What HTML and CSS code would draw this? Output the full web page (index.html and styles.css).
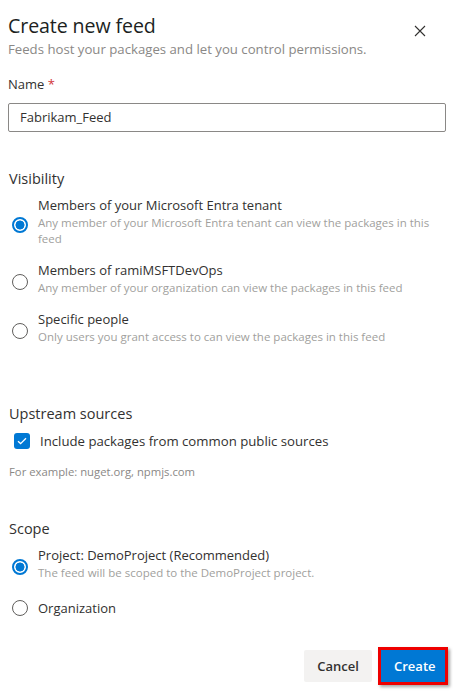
FILE: index.html
```html
<!DOCTYPE html>
<html lang="en">
<head>
<meta charset="utf-8">
<title>Create new feed</title>
<link rel="stylesheet" href="styles.css">
</head>
<body>
<div class="panel">
  <div class="header">
    <div class="header-text">
      <h1 class="title">Create new feed</h1>
      <p class="subtitle">Feeds host your packages and let you control permissions.</p>
    </div>
    <button class="close" aria-label="Close">
      <svg width="12" height="12" viewBox="0 0 12 12"><path d="M1 1L11 11M11 1L1 11" stroke="#323130" stroke-width="1.1" fill="none"/></svg>
    </button>
  </div>

  <label class="field-label">Name <span class="req">*</span></label>
  <div class="input">Fabrikam_Feed</div>

  <h2 class="section visibility">Visibility</h2>
  <div class="options">
    <div class="option first">
      <span class="radio checked offset"></span>
      <div class="opt-text">
        <div class="opt-title">Members of your Microsoft Entra tenant</div>
        <div class="opt-desc">Any member of your Microsoft Entra tenant can view the packages in this feed</div>
      </div>
    </div>
    <div class="option">
      <span class="radio offset"></span>
      <div class="opt-text">
        <div class="opt-title">Members of ramiMSFTDevOps</div>
        <div class="opt-desc">Any member of your organization can view the packages in this feed</div>
      </div>
    </div>
    <div class="option">
      <span class="radio offset"></span>
      <div class="opt-text">
        <div class="opt-title">Specific people</div>
        <div class="opt-desc">Only users you grant access to can view the packages in this feed</div>
      </div>
    </div>
  </div>

  <h2 class="section upstream">Upstream sources</h2>
  <div class="check-row">
    <span class="checkbox">
      <svg width="10" height="8" viewBox="0 0 10 8"><path d="M1 4.2L3.6 6.6L9 1.2" stroke="#fff" stroke-width="1.3" fill="none"/></svg>
    </span>
    <span class="check-label">Include packages from common public sources</span>
  </div>
  <p class="hint">For example: nuget.org, npmjs.com</p>

  <h2 class="section scope">Scope</h2>
  <div class="options">
    <div class="option first">
      <span class="radio checked offset"></span>
      <div class="opt-text">
        <div class="opt-title">Project: DemoProject (Recommended)</div>
        <div class="opt-desc">The feed will be scoped to the DemoProject project.</div>
      </div>
    </div>
    <div class="option org">
      <span class="radio"></span>
      <div class="opt-text">
        <div class="opt-title">Organization</div>
      </div>
    </div>
  </div>

  <div class="footer">
    <button class="btn cancel">Cancel</button>
    <span class="highlight"><button class="btn create">Create</button></span>
  </div>
</div>
</body>
</html>
```
FILE: styles.css
```css
* { box-sizing: border-box; }
html, body { margin: 0; padding: 0; background: #fff; }
body {
  font-family: "Segoe UI", "Open Sans", "Noto Sans", sans-serif;
  color: #323130;
  width: 453px;
  height: 691px;
  overflow: hidden;
}
.panel {
  padding: 12px 7px 0 8px;
}
.header {
  display: flex;
  justify-content: space-between;
  align-items: flex-start;
}
.title {
  margin: 0;
  font-size: 19.6px;
  font-weight: 400;
  line-height: 28px;
  color: #201f1e;
  letter-spacing: -0.1px;
}
.subtitle {
  margin: 0;
  font-size: 13.2px;
  line-height: 18px;
  color: #8a8886;
}
.close {
  border: 0;
  background: transparent;
  padding: 0;
  width: 12px;
  height: 12px;
  margin: 13px 20px 0 0;
  display: flex;
}
.field-label {
  display: block;
  margin-top: 16px;
  font-size: 13px;
  line-height: 20px;
  color: #323130;
}
.req { color: #d13438; }
.input {
  margin-top: 9px;
  height: 29px;
  border: 1px solid #8a8886;
  border-radius: 2px;
  padding: 0 11px;
  font-size: 13px;
  line-height: 27px;
  color: #323130;
}
.section {
  margin: 0;
  font-size: 14.5px;
  font-weight: 400;
  line-height: 22px;
  color: #323130;
  padding-left: 1px;
}
.visibility { margin-top: 36px; }
.upstream { margin-top: 58px; }
.scope { margin-top: 38px; }
.options {
  display: flex;
  flex-direction: column;
  gap: 13px;
  padding-left: 4px;
}
.option {
  display: flex;
  align-items: center;
  gap: 10px;
}
.option.first { margin-top: 5px; }
.option.org { margin-top: 4px; }
.radio {
  flex: none;
  width: 16px;
  height: 16px;
  border-radius: 50%;
  border: 1px solid #605e5c;
  background: #fff;
}
.radio.offset { margin-top: 7px; }
.radio.checked {
  border: 2px solid #0078d4;
  background: radial-gradient(circle, #0078d4 0 4.2px, #fff 4.8px);
}
.opt-title {
  font-size: 13px;
  line-height: 20px;
  color: #323130;
}
.opt-desc {
  font-size: 11.5px;
  line-height: 16px;
  color: #a19f9d;
}
.check-row {
  margin-top: 6px;
  padding-left: 6px;
  display: flex;
  align-items: center;
  gap: 10px;
  height: 20px;
}
.checkbox {
  width: 16px;
  height: 16px;
  border-radius: 3px;
  background: #0078d4;
  display: flex;
  align-items: center;
  justify-content: center;
}
.check-label {
  font-size: 13.2px;
  line-height: 20px;
}
.hint {
  margin: 13px 0 0 1px;
  font-size: 11.3px;
  line-height: 16px;
  color: #8a8886;
}
.footer {
  margin-top: 29px;
  margin-right: -2px;
  display: flex;
  justify-content: flex-end;
  align-items: center;
  gap: 6px;
}
.btn {
  font-family: inherit;
  font-size: 13px;
  font-weight: 600;
  border: 0;
  border-radius: 2px;
  height: 32px;
  padding: 0 13px;
  cursor: pointer;
}
.cancel {
  background: #f3f2f1;
  color: #323130;
  width: 68px;
}
.highlight {
  display: flex;
  border: 3px solid #ee0000;
  box-shadow: 2px 2px 3px rgba(0, 0, 0, 0.35);
}
.create {
  background: #0078d4;
  color: #fff;
  width: 64px;
  border-radius: 0;
}
```
